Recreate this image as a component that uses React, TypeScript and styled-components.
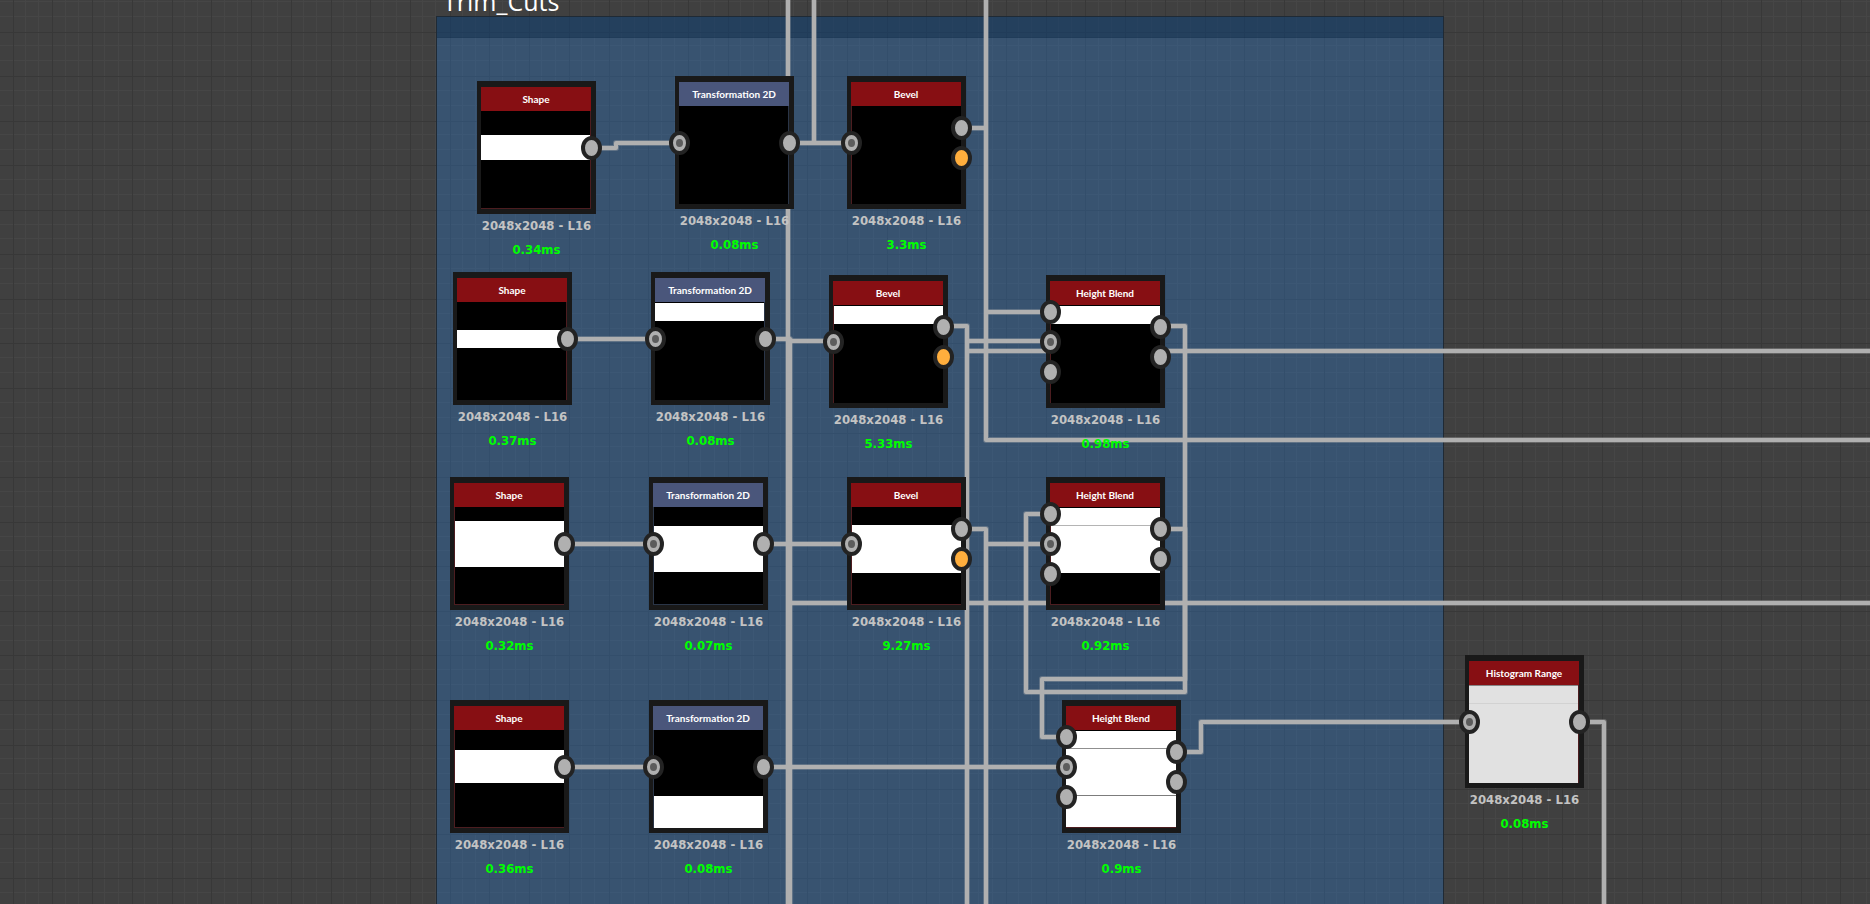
import React from "react";
import styled, { createGlobalStyle, css } from "styled-components";

const GlobalStyle = createGlobalStyle`
  *, *::before, *::after { box-sizing: border-box; }
  html, body { margin: 0; background: #404040; }
`;

/* ---------- canvas ---------- */

const Canvas = styled.main`
  position: relative;
  width: 100%;
  height: 100vh;
  overflow: hidden;
  background: #404040;
`;

const Layer = styled.svg`
  position: absolute;
  inset: 0;
  width: 100%;
  height: 100%;
  display: block;
  pointer-events: none;
`;

const GRID_X = { start: 12.7, step: 39.73 };
const GRID_Y = { start: 31.5, step: 44.57 };

const gridLine = (axis: { start: number; step: number }, third: number) =>
  Math.round(axis.start + (axis.step * third) / 3);

const thirds = Array.from({ length: 300 }, (_, i) => i - 3);

function Grid() {
  const minor = thirds.filter((i) => i % 3 !== 0);
  const major = thirds.filter((i) => i % 3 === 0);
  return (
    <Layer aria-hidden="true" shapeRendering="crispEdges">
      <g fill="#464646">
        {minor.map((i) => (
          <rect key={`x${i}`} x={gridLine(GRID_X, i) - 1} y={0} width={1} height="100%" />
        ))}
        {minor.map((i) => (
          <rect key={`y${i}`} x={0} y={gridLine(GRID_Y, i) - 1} width="100%" height={1} />
        ))}
      </g>
      <g fill="#383838">
        {major.map((i) => (
          <rect key={`x${i}`} x={gridLine(GRID_X, i)} y={0} width={1} height="100%" />
        ))}
        {major.map((i) => (
          <rect key={`y${i}`} x={0} y={gridLine(GRID_Y, i)} width="100%" height={1} />
        ))}
      </g>
    </Layer>
  );
}

/* ---------- frame ---------- */

const Frame = styled.section`
  position: absolute;
  left: 436px;
  top: 16px;
  bottom: -20px;
  width: 1008px;
  border: 1px solid #1f2a35;
  background: rgba(44, 112, 184, 0.4);
`;

const FrameBar = styled.div`
  height: 21px;
  background: rgba(0, 28, 56, 0.35);
  border-bottom: 1px solid rgba(0, 28, 56, 0.1);
`;

const FrameTitle = styled.h2`
  position: absolute;
  left: 6px;
  bottom: 100%;
  margin: 0 0 2px;
  font: 400 25px/28px "Open Sans", "Noto Sans", sans-serif;
  color: #fff;
  white-space: nowrap;
`;

/* ---------- wires ---------- */

const WIRES = [
  "M788 0V2000",
  "M814 0V143",
  "M986 0V440H6000",
  "M590 148H616V143H680",
  "M789 143H852",
  "M961 128H986",
  "M566 339H656",
  "M765 339H790V2000",
  "M788 341H833",
  "M942 326H967V2000",
  "M986 312H1051",
  "M967 341H1051",
  "M967 351H6000",
  "M1160 326H1185V692H1026V514H1051",
  "M564 544H653",
  "M762 544H852",
  "M961 529H986V2000",
  "M986 544H1051",
  "M1160 529H1185V679H1042V737H1067",
  "M790 603H6000",
  "M564 767H653",
  "M762 767H1067",
  "M1176 752H1201V722H1470",
  "M1579 722H1604V2000",
];

function Wires() {
  return (
    <Layer aria-hidden="true" fill="none" strokeLinejoin="round">
      {WIRES.map((d) => (
        <g key={d}>
          <path d={d} stroke="#b0b0b0" strokeOpacity={0.35} strokeWidth={6} />
          <path d={d} stroke="#b0b0b0" strokeWidth={4} />
        </g>
      ))}
    </Layer>
  );
}

/* ---------- nodes ---------- */

type Kind = "atomic" | "graph";
type PortKind = "open" | "linked" | "color";
type Band = { from: number; to: number; color: string };

const Node = styled.article<{ $x: number; $y: number }>`
  position: absolute;
  left: ${(p) => p.$x}px;
  top: ${(p) => p.$y}px;
  width: 119px;
  display: flex;
  flex-direction: column;
  align-items: center;
`;

const Box = styled.div`
  position: relative;
  width: 100%;
  height: 133px;
  margin-bottom: 2px;
  padding: 6px 5px 5px 4px;
  background: #191919;
`;

const NodeTitle = styled.h3<{ $kind: Kind }>`
  margin: 0;
  height: 24px;
  font: 700 10px/24px Lato, "Open Sans", sans-serif;
  text-align: center;
  white-space: nowrap;
  color: #fff;
  background: ${(p) => (p.$kind === "atomic" ? "#870f13" : "#4a567b")};
`;

const Thumb = styled.div<{ $fill: string; $kind: Kind; $edges: string }>`
  position: relative;
  height: 98px;
  overflow: hidden;
  background: ${(p) => p.$fill};

  &::after {
    content: "";
    position: absolute;
    inset: 0;
    border: 0 solid ${(p) => (p.$kind === "atomic" ? "#4c1d20" : "#2a3547")};
    ${(p) => p.$edges.includes("l") && css`border-left-width: 1px;`}
    ${(p) => p.$edges.includes("r") && css`border-right-width: 1px;`}
    ${(p) => p.$edges.includes("b") && css`border-bottom-width: 1px;`}
  }
`;

const Stripe = styled.div<{ $from: number; $to: number; $color: string }>`
  position: absolute;
  left: 0;
  right: 0;
  top: ${(p) => p.$from}px;
  height: ${(p) => p.$to - p.$from}px;
  background: ${(p) => p.$color};
`;

const Ports = styled.div<{ $side: "left" | "right" }>`
  position: absolute;
  top: 0;
  bottom: 0;
  ${(p) => p.$side}: -6px;
  display: flex;
  flex-direction: column;
  justify-content: center;
  gap: 6px;
`;

const Port = styled.span<{ $kind: PortKind }>`
  display: flex;
  align-items: center;
  justify-content: center;
  width: 21px;
  height: 24px;
  border: 4px solid #232323;
  border-radius: 50%;
  background: ${(p) => (p.$kind === "color" ? "#ffae3d" : "#b0b0b0")};

  &::before {
    content: "";
    display: ${(p) => (p.$kind === "linked" ? "block" : "none")};
    width: 7px;
    height: 8px;
    border-radius: 50%;
    background: #5c5c5c;
  }
`;

const Caption = styled.p<{ $color: string }>`
  margin: 0 0 4px;
  font: 700 13px/20px "DejaVu Sans Condensed", "DejaVu Sans", sans-serif;
  white-space: nowrap;
  color: ${(p) => p.$color};
`;

type NodeData = {
  id: string;
  title: string;
  kind: Kind;
  x: number;
  y: number;
  time: string;
  fill?: string;
  edges: string;
  bands: Band[];
  inputs: PortKind[];
  outputs: PortKind[];
};

const white = (from: number, to: number): Band => ({ from, to, color: "#fff" });
const seam = (at: number, color: string): Band => ({ from: at, to: at + 1, color });

const BLEND_IN: PortKind[] = ["open", "linked", "open"];
const BLEND_OUT: PortKind[] = ["open", "open"];
const BEVEL_OUT: PortKind[] = ["open", "color"];

const NODES: NodeData[] = [
  { id: "shape1", title: "Shape", kind: "atomic", x: 477, y: 81, time: "0.34ms", edges: "rb", bands: [white(24, 49)], inputs: [], outputs: ["open"] },
  { id: "transform1", title: "Transformation 2D", kind: "graph", x: 675, y: 76, time: "0.08ms", edges: "r", bands: [], inputs: ["linked"], outputs: ["open"] },
  { id: "bevel1", title: "Bevel", kind: "atomic", x: 847, y: 76, time: "3.3ms", edges: "l", bands: [], inputs: ["linked"], outputs: BEVEL_OUT },

  { id: "shape2", title: "Shape", kind: "atomic", x: 453, y: 272, time: "0.37ms", edges: "r", bands: [white(28, 46)], inputs: [], outputs: ["open"] },
  { id: "transform2", title: "Transformation 2D", kind: "graph", x: 651, y: 272, time: "0.08ms", edges: "r", bands: [white(1, 19)], inputs: ["linked"], outputs: ["open"] },
  { id: "bevel2", title: "Bevel", kind: "atomic", x: 829, y: 275, time: "5.33ms", edges: "l", bands: [white(1, 19)], inputs: ["linked"], outputs: BEVEL_OUT },
  { id: "blend2", title: "Height Blend", kind: "atomic", x: 1046, y: 275, time: "0.98ms", edges: "l", bands: [white(1, 19)], inputs: BLEND_IN, outputs: BLEND_OUT },

  { id: "shape3", title: "Shape", kind: "atomic", x: 450, y: 477, time: "0.32ms", edges: "lb", bands: [white(14, 60)], inputs: [], outputs: ["open"] },
  { id: "transform3", title: "Transformation 2D", kind: "graph", x: 649, y: 477, time: "0.07ms", edges: "lb", bands: [white(19, 65)], inputs: ["linked"], outputs: ["open"] },
  { id: "bevel3", title: "Bevel", kind: "atomic", x: 847, y: 477, time: "9.27ms", edges: "lb", bands: [white(18, 66)], inputs: ["linked"], outputs: BEVEL_OUT },
  { id: "blend3", title: "Height Blend", kind: "atomic", x: 1046, y: 477, time: "0.92ms", edges: "lb", bands: [white(1, 66), seam(18, "#b4b4b4")], inputs: BLEND_IN, outputs: BLEND_OUT },

  { id: "shape4", title: "Shape", kind: "atomic", x: 450, y: 700, time: "0.36ms", edges: "lb", bands: [white(20, 53)], inputs: [], outputs: ["open"] },
  { id: "transform4", title: "Transformation 2D", kind: "graph", x: 649, y: 700, time: "0.08ms", edges: "l", bands: [white(66, 98)], inputs: ["linked"], outputs: ["open"] },
  { id: "blend4", title: "Height Blend", kind: "atomic", x: 1062, y: 700, time: "0.9ms", edges: "b", bands: [white(1, 98), seam(18, "#8f8f8f"), seam(65, "#7c7c7c")], inputs: BLEND_IN, outputs: BLEND_OUT },

  { id: "histogram", title: "Histogram Range", kind: "atomic", x: 1465, y: 655, time: "0.08ms", fill: "#e1e1e1", edges: "r", bands: [seam(0, "#858585"), seam(18, "#d2d2d2")], inputs: ["linked"], outputs: ["open"] },
];

function GraphNode({ node }: { node: NodeData }) {
  return (
    <Node $x={node.x} $y={node.y}>
      <Box>
        <NodeTitle $kind={node.kind}>{node.title}</NodeTitle>
        <Thumb $fill={node.fill ?? "#000"} $kind={node.kind} $edges={node.edges}>
          {node.bands.map((b, i) => (
            <Stripe key={i} $from={b.from} $to={b.to} $color={b.color} />
          ))}
        </Thumb>
        <Ports $side="left">
          {node.inputs.map((kind, i) => (
            <Port key={i} $kind={kind} />
          ))}
        </Ports>
        <Ports $side="right">
          {node.outputs.map((kind, i) => (
            <Port key={i} $kind={kind} />
          ))}
        </Ports>
      </Box>
      <Caption $color="#c3c3c3">2048x2048 - L16</Caption>
      <Caption $color="#00ff00">{node.time}</Caption>
    </Node>
  );
}

export default function App() {
  return (
    <>
      <GlobalStyle />
      <Canvas>
        <Grid />
        <Frame>
          <FrameTitle>Trim_Cuts</FrameTitle>
          <FrameBar />
        </Frame>
        <Wires />
        {NODES.map((node) => (
          <GraphNode key={node.id} node={node} />
        ))}
      </Canvas>
    </>
  );
}
